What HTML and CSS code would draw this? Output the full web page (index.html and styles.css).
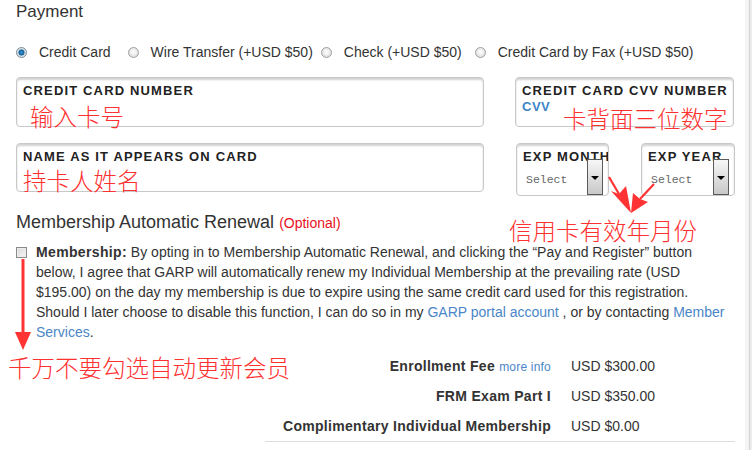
FILE: index.html
```html
<!DOCTYPE html>
<html lang="en">
<head>
<meta charset="utf-8">
<title>Payment</title>
<link rel="stylesheet" href="styles.css">
</head>
<body>
<div class="page">
  <h2 class="title">Payment</h2>

  <div class="radios">
    <label class="opt first"><span class="radio checked"></span>Credit Card</label>
    <label class="opt second"><span class="radio"></span>Wire Transfer (+USD $50)</label>
    <label class="opt third"><span class="radio"></span>Check (+USD $50)</label>
    <label class="opt"><span class="radio"></span>Credit Card by Fax (+USD $50)</label>
  </div>

  <div class="row">
    <div class="field wide">
      <div class="flabel">CREDIT CARD NUMBER</div>
      <div class="note note-card">输入卡号</div>
    </div>
    <div class="field cvv">
      <div class="flabel">CREDIT CARD CVV NUMBER</div>
      <div class="cvvtext">CVV</div>
      <div class="note note-cvv">卡背面三位数字</div>
    </div>
  </div>

  <div class="row row2">
    <div class="field wide name">
      <div class="flabel">NAME AS IT APPEARS ON CARD</div>
      <div class="note note-name">持卡人姓名</div>
    </div>
    <div class="field exp month">
      <div class="flabel">EXP MONTH</div>
      <div class="select">Select</div>
      <span class="dropbtn"><span class="tri"></span></span>
    </div>
    <div class="field exp year">
      <div class="flabel">EXP YEAR</div>
      <div class="select">Select</div>
      <span class="dropbtn"><span class="tri"></span></span>
    </div>
  </div>

  <h2 class="subtitle">Membership Automatic Renewal <span class="optional">(Optional)</span></h2>

  <div class="renew">
    <span class="checkbox"></span>
    <p class="renew-text"><b>Membership:</b> By opting in to Membership Automatic Renewal, and clicking the “Pay and Register” button below, I agree that GARP will automatically renew my Individual Membership at the prevailing rate (USD $195.00) on the day my membership is due to expire using the same credit card used for this registration. Should I later choose to disable this function, I can do so in my <a class="link">GARP portal account</a> , or by contacting <a class="link">Member Services</a>.</p>
  </div>

  <div class="fees">
    <div class="flab">Enrollment Fee <a class="more">more info</a></div>
    <div class="fval">USD $300.00</div>
    <div class="flab">FRM Exam Part I</div>
    <div class="fval">USD $350.00</div>
    <div class="flab">Complimentary Individual Membership</div>
    <div class="fval">USD $0.00</div>
  </div>

  <div class="note note-exp">信用卡有效年月份</div>
  <div class="note note-renew">千万不要勾选自动更新会员</div>

  <svg class="overlay" width="752" height="450" viewBox="0 0 752 450">
    <line x1="609" y1="177" x2="619" y2="194" stroke="#ff3333" stroke-width="2.2"/>
    <polygon points="611,191 631,213 626,186 619,194" fill="#ff3333"/>
    <line x1="654" y1="184" x2="640" y2="199" stroke="#ff3333" stroke-width="2.2"/>
    <polygon points="633,193 631,213 648,202 640,199" fill="#ff3333"/>
    <rect x="21.5" y="259" width="3" height="76" fill="#ff3333"/>
    <polygon points="15,332 31,332 23,350" fill="#ff3333"/>
  </svg>
</div>
</body>
</html>
```

FILE: styles.css
```css
html, body {
  margin: 0;
  padding: 0;
}
body {
  width: 752px;
  height: 450px;
  overflow: hidden;
  background: linear-gradient(to right, #ffffff 745px, #f4f4f4 745px, #f4f4f4 749px, #d2d2d2 749px, #d2d2d2 750px, #ececec 750px);
  font-family: "Liberation Sans", Arial, sans-serif;
  color: #333333;
}
.page {
  position: relative;
  width: 745px;
  height: 450px;
  box-sizing: border-box;
  padding: 2px 0 0 16px;
}
.title {
  margin: 0;
  font-size: 17px;
  line-height: 20px;
  font-weight: normal;
  color: #333;
}
.radios {
  margin-top: 20px;
  display: flex;
  align-items: center;
  height: 20px;
  font-size: 14px;
  line-height: 20px;
  color: #333;
}
.opt {
  display: flex;
  align-items: center;
  margin-right: 12px;
}
.opt.first {
  margin-right: 17px;
}
.opt.second {
  margin-right: 8px;
}
.opt.third {
  margin-right: 13px;
}
.radio {
  width: 11px;
  height: 11px;
  box-sizing: border-box;
  border-radius: 50%;
  border: 1px solid #a0a0a0;
  background: radial-gradient(circle at 50% 45%, #ffffff 0, #f0f0f0 40%, #cfcfcf 100%);
  margin-right: 12px;
}
.radio.checked {
  border-color: #7a8a96;
  background: radial-gradient(circle at 50% 50%, #3d9ad8 0, #0f5c90 2.6px, #cfdbe4 3.4px, #f2f2f2 100%);
}
.row {
  margin-top: 15px;
  display: flex;
  align-items: flex-start;
}
.row2 {
  margin-top: 16px;
}
.field {
  position: relative;
  box-sizing: border-box;
  border: 1px solid #c8c8c8;
  border-radius: 4px;
  box-shadow: inset 0 2px 2px rgba(0, 0, 0, 0.18);
  padding: 6px 6px 0;
  background: #fff;
}
.wide {
  width: 468px;
  height: 50px;
}
.name {
  height: 49px;
}
.cvv {
  width: 219px;
  height: 50px;
  margin-left: 31px;
}
.exp {
  height: 53px;
  width: 93px;
  white-space: nowrap;
  overflow: hidden;
}
.month {
  margin-left: 32px;
}
.year {
  margin-left: 32px;
  width: 94px;
}
.flabel {
  font-size: 13px;
  line-height: 14px;
  font-weight: bold;
  letter-spacing: 1.15px;
  color: #222;
  white-space: nowrap;
}
.cvvtext {
  margin-top: 2px;
  font-size: 13px;
  line-height: 14px;
  font-weight: bold;
  letter-spacing: 0.5px;
  color: #3d85c6;
}
.select {
  margin-top: 9px;
  margin-left: 3px;
  font-family: "Liberation Mono", "Courier New", monospace;
  font-size: 11.5px;
  line-height: 14px;
  color: #666;
}
.dropbtn {
  position: absolute;
  top: 15px;
  right: 5px;
  width: 16px;
  height: 36px;
  box-sizing: border-box;
  border: 1px solid #5a5a5a;
  background: linear-gradient(to bottom, #f7f7f7, #c8c8c8);
  display: flex;
  align-items: center;
  justify-content: center;
}
.tri {
  width: 0;
  height: 0;
  border-left: 4px solid transparent;
  border-right: 4px solid transparent;
  border-top: 4px solid #000;
  margin-top: 1px;
}
.note {
  font-family: "Noto Sans CJK SC", "Noto Sans CJK JP", sans-serif;
  font-size: 23.5px;
  line-height: 24px;
  font-weight: 300;
  color: #ff3030;
  white-space: nowrap;
}
.note-card {
  margin-top: 6px;
  margin-left: 7px;
}
.note-name {
  margin-top: 4px;
  margin-left: 0;
}
.note-cvv {
  position: absolute;
  left: 47px;
  top: 28px;
}
.note-exp {
  position: absolute;
  left: 509px;
  top: 218px;
}
.note-renew {
  position: absolute;
  left: 8px;
  top: 355px;
}
.subtitle {
  margin: 16px 0 0;
  font-size: 18px;
  line-height: 20px;
  font-weight: normal;
  color: #333;
}
.optional {
  font-size: 14px;
  color: #e8101c;
}
.renew {
  margin-top: 9px;
  display: flex;
  align-items: flex-start;
}
.checkbox {
  flex: none;
  width: 11px;
  height: 11px;
  box-sizing: border-box;
  margin-top: 5px;
  margin-right: 9px;
  border: 1px solid #8a8a8a;
  background: linear-gradient(135deg, #d8d8d8, #f6f6f6);
  box-shadow: inset 0 0 0 1px #eee;
}
.renew-text {
  margin: 0;
  width: 698px;
  font-size: 14px;
  line-height: 20px;
  color: #333;
}
.renew-text b {
  color: #333;
  letter-spacing: 0.35px;
}
.link {
  color: #4a86c8;
  text-decoration: none;
}
.fees {
  margin: 9px 0 0 249px;
  width: 470px;
  display: grid;
  grid-template-columns: 286px 1fr;
  column-gap: 20px;
  grid-auto-rows: 30px;
  align-items: center;
  border-bottom: 1px solid #dcdcdc;
  font-size: 14px;
  color: #333;
}
.flab {
  text-align: right;
  font-weight: bold;
  letter-spacing: 0.3px;
  white-space: nowrap;
}
.more {
  font-weight: normal;
  font-size: 12px;
  letter-spacing: 0.2px;
  color: #4a86c8;
}
.fval {
  white-space: nowrap;
}
.overlay {
  position: absolute;
  left: 0;
  top: 0;
  pointer-events: none;
}
```
